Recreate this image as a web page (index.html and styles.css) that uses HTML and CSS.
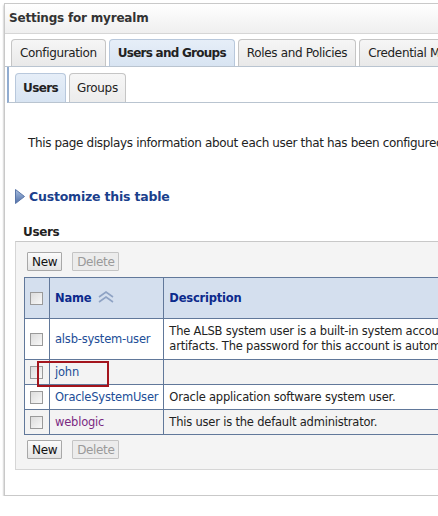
FILE: index.html
```html
<!DOCTYPE html>
<html lang="en">
<head>
    <meta charset="UTF-8">
    <title>Settings for myrealm</title>
    <link rel="stylesheet" href="styles.css">
</head>
<body>
    <div class="frame">
        <div class="title-bar">Settings for myrealm</div>

        <div class="tabs">
            <div class="tab">Configuration</div>
            <div class="tab active">Users and Groups</div>
            <div class="tab">Roles and Policies</div>
            <div class="tab">Credential Mappings</div>
            <div class="tab">Providers</div>
        </div>

        <div class="subtabs">
            <div class="subtab active">Users</div>
            <div class="subtab">Groups</div>
        </div>

        <p class="intro">This page displays information about each user that has been configured in this security realm.</p>

        <div class="customize">
            <svg class="arrow" width="10" height="15" viewBox="0 0 10 15">
                <defs>
                    <linearGradient id="tri" x1="0" y1="0" x2="0" y2="1">
                        <stop offset="0" stop-color="#a9bfe0"/>
                        <stop offset="1" stop-color="#4f6fa8"/>
                    </linearGradient>
                </defs>
                <path d="M0.5 0.5 L9.5 7.5 L0.5 14.5 Z" fill="url(#tri)" stroke="#5a76a8" stroke-width="1"/>
            </svg>
            <a href="#">Customize this table</a>
        </div>

        <div class="section-label">Users</div>

        <div class="panel">
            <div class="actions">
                <button class="btn">New</button>
                <button class="btn" disabled>Delete</button>
            </div>

            <table class="users">
                <thead>
                    <tr>
                        <th class="col-check"><span class="check"></span></th>
                        <th class="col-name">Name
                            <svg class="sort" width="18" height="12" viewBox="0 0 18 12">
                                <path d="M2 6 L9 1 L16 6 M2 11 L9 6 L16 11" fill="none" stroke="#8fa3c4" stroke-width="1.6"/>
                            </svg>
                        </th>
                        <th>Description</th>
                    </tr>
                </thead>
                <tbody>
                    <tr class="tall">
                        <td class="col-check"><span class="check"></span></td>
                        <td><a href="#">alsb-system-user</a></td>
                        <td>The ALSB system user is a built-in system account used to manage ALSB<br>artifacts. The password for this account is automatically generated.</td>
                    </tr>
                    <tr class="alt">
                        <td class="col-check"><span class="check"></span></td>
                        <td class="marked"><a href="#">john</a><span class="highlight"></span></td>
                        <td></td>
                    </tr>
                    <tr>
                        <td class="col-check"><span class="check"></span></td>
                        <td><a href="#">OracleSystemUser</a></td>
                        <td>Oracle application software system user.</td>
                    </tr>
                    <tr class="alt">
                        <td class="col-check"><span class="check"></span></td>
                        <td><a href="#" class="visited">weblogic</a></td>
                        <td>This user is the default administrator.</td>
                    </tr>
                </tbody>
            </table>

            <div class="actions bottom">
                <button class="btn">New</button>
                <button class="btn" disabled>Delete</button>
            </div>
        </div>
    </div>
</body>
</html>
```

FILE: styles.css
```css
html, body {
    margin: 0;
    padding: 0;
    overflow: hidden;
    background: #fff;
}
body {
    font-family: "DejaVu Sans", Verdana, sans-serif;
    font-size: 12px;
    letter-spacing: -0.35px;
    color: #222;
}
.frame {
    width: 760px;
    height: 493px;
    margin: 3px 0 0 4px;
    border: 1px solid #c9c9c9;
    border-right: none;
    box-shadow: 0 2px 2px #9c9c9c;
    box-sizing: border-box;
}
.title-bar {
    height: 29px;
    line-height: 29px;
    padding-left: 4px;
    font-size: 12px;
    letter-spacing: -0.2px;
    font-weight: bold;
    color: #333;
    background: linear-gradient(#ffffff, #efefef);
    border-bottom: 1px solid #d6d6d6;
}
.tabs {
    display: flex;
    gap: 3px;
    margin-top: 5px;
    padding-left: 6px;
    border-bottom: 1px solid #b9c4d0;
}
.tab {
    height: 26px;
    line-height: 26px;
    padding: 0 8px;
    white-space: nowrap;
    background: linear-gradient(#f6f6f6, #e9e9e9);
    border: 1px solid #c5c5c5;
    border-bottom: none;
    border-radius: 4px 4px 0 0;
    color: #222;
}
.tab.active {
    font-weight: bold;
    letter-spacing: -0.75px;
    background: linear-gradient(#e6eef8, #d8e4f2);
    border-color: #b8c8dc;
}
.subtabs {
    display: flex;
    gap: 3px;
    padding: 6px 0 0 6px;
    margin-left: 2px;
    border-left: 2px solid #91acd0;
    border-bottom: 1px solid #b9c4d0;
}
.subtab {
    height: 28px;
    line-height: 28px;
    padding: 0 7px;
    background: linear-gradient(#f6f6f6, #ececec);
    border: 1px solid #c5c5c5;
    border-bottom: none;
    border-radius: 4px 4px 0 0;
}
.subtab.active {
    font-weight: bold;
    letter-spacing: -0.6px;
    background: linear-gradient(#e6eef8, #d8e4f2);
    border-color: #b8c8dc;
}
.intro {
    margin: 33px 0 0 23px;
    white-space: nowrap;
}
.customize {
    display: flex;
    align-items: center;
    gap: 4px;
    margin: 39px 0 0 10px;
}
.customize a {
    font-size: 12.5px;
    letter-spacing: -0.2px;
    font-weight: bold;
    color: #1b3f8c;
    text-decoration: none;
}
.section-label {
    margin: 21px 0 0 18px;
    font-weight: bold;
    color: #222;
}
.panel {
    margin: 2px 0 0 10px;
    padding: 10px 0 10px 8px;
    height: 229px;
    box-sizing: border-box;
    background: #f4f4f4;
    border-top: 1px solid #c8c8c8;
    border-left: 1px solid #d6d6d6;
    border-bottom: 1px solid #d6d6d6;
}
.actions {
    display: flex;
    gap: 10px;
    padding-left: 3px;
}
.actions.bottom {
    margin-top: 5px;
}
.btn {
    height: 19px;
    padding: 0 4px;
    font-family: "DejaVu Sans", Verdana, sans-serif;
    font-size: 12px;
    letter-spacing: -0.35px;
    color: #111;
    background: linear-gradient(#fbfbfb, #e4e4e4);
    border: 1px solid #a8a8a8;
    border-radius: 1px;
}
.btn:disabled {
    color: #9a9a9a;
    background: #ececec;
    border-color: #c4c4c4;
}
.users {
    margin-top: 6px;
    border-collapse: collapse;
    background: #fff;
    white-space: nowrap;
}
.users th,
.users td {
    border: 1px solid #61789a;
    padding: 0 5px;
    text-align: left;
    vertical-align: middle;
    letter-spacing: -0.2px;
}
.users th {
    height: 40px;
    background: #d4dfee;
    color: #0c2a8c;
    font-size: 11.5px;
}
.users td {
    height: 24px;
    font-size: 11.5px;
}
.users tr.tall td {
    height: 40px;
    line-height: 15px;
}
.users tr.alt td {
    background: #f3f3f3;
}
.users .col-check {
    width: 14px;
    padding: 0 5px;
}
.users .col-name {
    width: 103px;
}
.sort {
    vertical-align: -1px;
    margin-left: 2px;
}
.users a {
    color: #214d97;
    text-decoration: none;
}
.users a.visited {
    color: #7a2a82;
}
.check {
    display: block;
    width: 11px;
    height: 11px;
    border: 1px solid #9a9a9a;
    background: linear-gradient(135deg, #dcdcdc, #f8f8f8);
}
.marked {
    position: relative;
}
.highlight {
    position: absolute;
    left: -13px;
    top: 1px;
    width: 68px;
    height: 22px;
    border: 2px solid #a3141c;
}
```
